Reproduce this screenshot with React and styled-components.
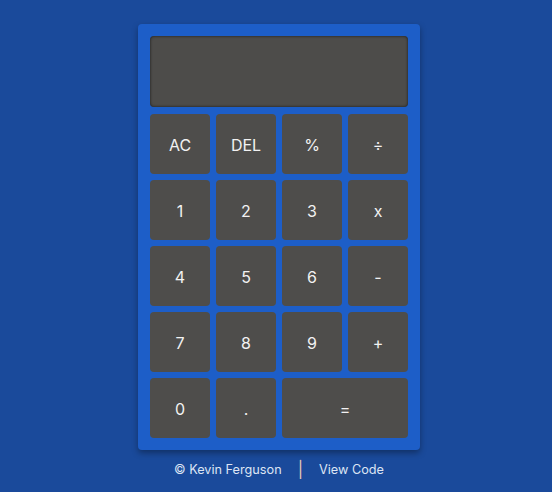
import React, { useState } from "react";
import styled, { createGlobalStyle } from "styled-components";

const GlobalStyle = createGlobalStyle`
  html, body {
    margin: 0;
    padding: 0;
    background: #1a4a9b;
    font-family: Inter, "Noto Sans", sans-serif;
  }
`;

const keys = [
  ["AC", "DEL", "%", "÷"],
  ["1", "2", "3", "x"],
  ["4", "5", "6", "-"],
  ["7", "8", "9", "+"],
  ["0", ".", "="],
];

const App = () => {
  const [value] = useState("");

  return (
    <Page>
      <GlobalStyle />
      <Calculator>
        <Display>{value}</Display>
        <Keypad>
          {keys.flat().map((k) => (
            <Key key={k} wide={k === "="}>
              {k}
            </Key>
          ))}
        </Keypad>
      </Calculator>
      <Footer>
        <span>© Kevin Ferguson</span>
        <Divider>|</Divider>
        <span>View Code</span>
      </Footer>
    </Page>
  );
};

export default App;

const Page = styled.div`
  min-height: 492px;
  display: flex;
  flex-direction: column;
  align-items: center;
  padding: 24px 0 0 6px;
  box-sizing: border-box;
`;

const Calculator = styled.div`
  width: 282px;
  box-sizing: border-box;
  padding: 12px;
  background: #1d5ec8;
  border-radius: 4px;
  box-shadow: 0 3px 6px rgba(0, 0, 0, 0.35);
`;

const Display = styled.div`
  height: 71px;
  box-sizing: border-box;
  background: #4d4c4a;
  border-radius: 4px;
  box-shadow: inset 0 0 3px rgba(0, 0, 0, 0.7);
  margin-bottom: 7px;
  color: #fff;
`;

const Keypad = styled.div`
  display: grid;
  grid-template-columns: repeat(4, 60px);
  grid-auto-rows: 60px;
  gap: 6px;
`;

const Key = styled.button`
  grid-column: ${(p) => (p.wide ? "span 2" : "auto")};
  border: none;
  border-radius: 4px;
  background: #4e4d4b;
  color: #f2f2f2;
  font-family: Inter, "Noto Sans", sans-serif;
  font-size: 16px;
  padding: 1px 0 0;
  cursor: pointer;
`;

const Footer = styled.div`
  display: flex;
  align-items: center;
  gap: 16px;
  margin-top: 9px;
  color: #dde5f4;
  font-size: 12.7px;
`;

const Divider = styled.span`
  font-size: 16px;
  color: #e8c9b5;
`;
